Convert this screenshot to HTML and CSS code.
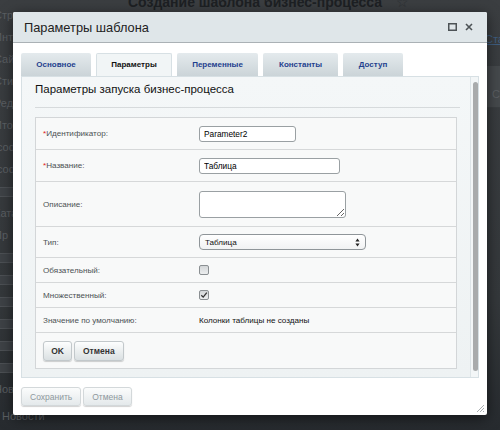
FILE: index.html
```html
<!DOCTYPE html>
<html lang="ru">
<head>
    <meta charset="UTF-8">
    <title>Параметры шаблона</title>
    <link rel="stylesheet" href="styles.css">
</head>
<body>

<div class="page">
    <div class="page-title">Создание шаблона бизнес-процесса <span class="star">☆</span></div>
    <div class="page-main">
        <div class="side">
            <div>Структура</div>
            <div>Интерфейс</div>
            <div>Сайт с</div>
            <div>Стиль</div>
            <div>Редизайн</div>
            <div>Итого</div>
            <div>[code]</div>
            <div>[code]</div>
            <div><span class="side-box"></span></div>
            <div>Каталог</div>
            <div>Пр</div>
            <div><span class="side-box"></span></div>
            <div><span class="side-box"></span></div>
            <div><span class="side-box"></span></div>
            <div><span class="side-box"></span></div>
            <div><span class="side-box"></span></div>
            <div><span class="side-box"></span></div>
            <div>Новости</div>
        </div>
        <div class="right-strip">
            <div class="strip-link">Статьи</div>
            <div class="strip-band">Со</div>
        </div>
    </div>
    <div class="page-bottom">Новости</div>
</div>

<div class="dialog">
    <div class="dialog-head">
        <div class="dialog-title">Параметры шаблона</div>
        <div class="dialog-icons">
            <svg width="9" height="8" viewBox="0 0 9 8"><rect x="0.75" y="0.75" width="7.5" height="6.5" fill="none" stroke="#4d5356" stroke-width="1.5"/></svg>
            <svg width="8" height="8" viewBox="0 0 8 8"><path d="M1 1 L7 7 M7 1 L1 7" stroke="#4d5356" stroke-width="1.6"/></svg>
        </div>
    </div>

    <div class="dialog-body">
        <div class="tabs">
            <div class="tab t-main">Основное</div>
            <div class="tab t-params active">Параметры</div>
            <div class="tab t-vars">Переменные</div>
            <div class="tab t-const">Константы</div>
            <div class="tab t-access">Доступ</div>
        </div>

        <div class="panel">
            <div class="panel-content">
                <div class="panel-title">Параметры запуска бизнес-процесса</div>

                <div class="form">
                    <div class="row">
                        <div class="label"><span class="req">*</span>Идентификатор:</div>
                        <div class="field"><input class="input w-id" type="text" value="Parameter2"></div>
                    </div>
                    <div class="row">
                        <div class="label"><span class="req">*</span>Название:</div>
                        <div class="field"><input class="input w-name" type="text" value="Таблица"></div>
                    </div>
                    <div class="row row-tall">
                        <div class="label">Описание:</div>
                        <div class="field"><textarea class="textarea"></textarea></div>
                    </div>
                    <div class="row row-type">
                        <div class="label">Тип:</div>
                        <div class="field">
                            <div class="select">
                                <span>Таблица</span>
                                <svg width="5" height="9" viewBox="0 0 5 9"><path d="M2.5 0.5 L4.6 3.6 H0.4 Z M2.5 8.5 L4.6 5.4 H0.4 Z" fill="#222"/></svg>
                            </div>
                        </div>
                    </div>
                    <div class="row row-short">
                        <div class="label">Обязательный:</div>
                        <div class="field"><span class="check"></span></div>
                    </div>
                    <div class="row row-short">
                        <div class="label">Множественный:</div>
                        <div class="field">
                            <span class="check">
                                <svg width="8" height="8" viewBox="0 0 8 8"><path d="M1.3 4.2 L3.2 6.1 L6.8 1.6" fill="none" stroke="#333" stroke-width="1.3"/></svg>
                            </span>
                        </div>
                    </div>
                    <div class="row row-short">
                        <div class="label">Значение по умолчанию:</div>
                        <div class="field">Колонки таблицы не созданы</div>
                    </div>
                    <div class="row row-buttons">
                        <button class="btn btn-ok">OK</button>
                        <button class="btn">Отмена</button>
                    </div>
                </div>
            </div>
            <div class="scrollbar"><div class="thumb"></div></div>
        </div>
    </div>

    <div class="dialog-foot">
        <button class="btn btn-off">Сохранить</button>
        <button class="btn btn-off">Отмена</button>
    </div>

    <svg class="grip" width="9" height="9" viewBox="0 0 9 9"><path d="M8 1 L1 8 M8 4 L4 8 M8 7 L7 8" stroke="#a9aeb1" stroke-width="1"/></svg>
</div>

</body>
</html>
```

FILE: styles.css
```css
body {
    margin: 0;
    width: 500px;
    height: 430px;
    overflow: hidden;
    position: relative;
    background: linear-gradient(#3b3e41, #34383b 70%, #272b2f);
    font-family: "Liberation Sans", Arial, sans-serif;
}

/* страница под затемнением */
.page {
    color: #5b5f63;
    font-size: 11px;
}
.page-title {
    margin-top: -7px;
    padding-left: 128px;
    font-size: 14px;
    font-weight: bold;
    line-height: 18px;
    color: #1d2023;
}
.star {
    font-weight: normal;
    color: #2c3033;
    margin-left: 10px;
}
.page-main {
    display: flex;
    justify-content: space-between;
}
.side {
    display: flex;
    flex-direction: column;
    width: 13px;
    margin-top: -7px;
    overflow: hidden;
}
.side div {
    height: 22px;
    line-height: 22px;
    white-space: nowrap;
    text-indent: -6px;
}
.side-box {
    display: inline-block;
    width: 26px;
    height: 8px;
    border: 1px solid #4c5054;
    background: #3e4246;
    vertical-align: middle;
}
.page-bottom {
    margin-top: 10px;
    padding-left: 2px;
}
.right-strip {
    width: 13px;
    overflow: hidden;
}
.strip-link {
    margin-top: 22px;
    color: #3f5e80;
    text-decoration: underline;
    white-space: nowrap;
    text-indent: -2px;
}
.strip-band {
    margin-top: 21px;
    height: 42px;
    padding-top: 22px;
    box-sizing: border-box;
    background: #45494c;
    border-bottom: 1px solid #3a3e41;
    white-space: nowrap;
    padding-left: 5px;
}

/* окно */
.dialog {
    position: absolute;
    left: 13px;
    top: 12px;
    width: 474px;
    height: 403px;
    background: #fff;
    border-radius: 2px;
    box-shadow: 0 3px 14px rgba(0, 0, 0, 0.55);
    display: flex;
    flex-direction: column;
}
.dialog-head {
    height: 30px;
    flex-shrink: 0;
    display: flex;
    align-items: center;
    justify-content: space-between;
    padding: 0 14px 0 11px;
    background: #dfe6e9;
    border-bottom: 1px solid #aab1b5;
    border-radius: 2px 2px 0 0;
}
.dialog-title {
    font-size: 12.8px;
    color: #222;
}
.dialog-icons {
    display: flex;
    align-items: center;
    gap: 8px;
}
.dialog-body {
    padding: 10px 8px 0;
}

.tabs {
    display: flex;
    gap: 5px;
    height: 23px;
}
.tab {
    box-sizing: border-box;
    text-align: center;
    line-height: 23px;
    font-size: 8px;
    font-weight: bold;
    color: #1f3f8e;
    background: linear-gradient(#e4eaed, #cbd4d8);
    border-radius: 2px 2px 0 0;
}
.t-main { width: 70px; }
.t-params { width: 76px; }
.t-vars { width: 81px; }
.t-const { width: 75px; }
.t-access { width: 60px; }
.tab.active {
    color: #111;
    background: #f1f5f6;
    border: 1px solid #d7e0e4;
    border-bottom: none;
    line-height: 22px;
}

.panel {
    height: 302px;
    box-sizing: border-box;
    display: flex;
    background: linear-gradient(#f4f7f8, #eef2f3);
    border: 1px solid #d7e0e4;
}
.panel-content {
    flex: 1;
    padding: 0 13px;
}
.panel-title {
    font-size: 11.5px;
    line-height: 24px;
    color: #111;
    padding-bottom: 6px;
    border-bottom: 1px solid #d6dadc;
    margin-right: -3px;
}
.scrollbar {
    width: 10px;
    border-left: 1px solid #dde4e7;
    background: #f3f6f7;
    padding: 5px 0 6px 2px;
    box-sizing: border-box;
}
.thumb {
    width: 5px;
    height: 100%;
    border-radius: 3px;
    background: #a9abac;
}

.form {
    margin-top: 9px;
    width: 420px;
    background: #f8f9f9;
    border: 1px solid #d3d6d8;
    font-size: 8.1px;
    color: #111;
}
.row {
    box-sizing: border-box;
    display: flex;
    align-items: center;
    height: 32px;
    border-bottom: 1px solid #d6d8d9;
}
.row-tall {
    height: 45px;
}
.row-type {
    height: 31px;
}
.row-short {
    height: 25px;
}
.row-buttons {
    height: 35px;
    border-bottom: none;
    gap: 2px;
    padding-left: 7px;
}
.label {
    width: 156px;
    padding-left: 7px;
    color: #4c5154;
}
.req {
    color: #d22;
}
.field {
    display: flex;
    align-items: center;
}
.input {
    height: 16px;
    box-sizing: border-box;
    border: 1px solid #9aa0a3;
    border-radius: 3px;
    background: #fff;
    font-family: inherit;
    font-size: 8.3px;
    color: #000;
    padding: 0 4px;
    margin: 0;
}
.w-id {
    width: 97px;
}
.w-name {
    width: 141px;
}
.textarea {
    width: 147px;
    height: 27px;
    box-sizing: border-box;
    border: 1px solid #9aa0a3;
    border-radius: 3px;
    background: #fff;
    margin: 0;
}
.select {
    width: 167px;
    height: 16px;
    box-sizing: border-box;
    border: 1px solid #8f9599;
    border-radius: 4px;
    background: linear-gradient(#fff, #f1f2f3);
    display: flex;
    align-items: center;
    justify-content: space-between;
    padding: 0 5px;
}
.check {
    width: 10px;
    height: 10px;
    box-sizing: border-box;
    border: 1px solid #8a8f92;
    border-radius: 2px;
    background: linear-gradient(#d3d6d8, #eceeef);
    display: flex;
    align-items: center;
    justify-content: center;
}

.btn {
    height: 20px;
    padding: 0 8px;
    border: 1px solid #c2c8cb;
    border-radius: 3px;
    background: linear-gradient(#fdfefe, #dae0e2);
    box-shadow: 0 1px 1px rgba(0, 0, 0, 0.18);
    font-family: inherit;
    font-size: 8.5px;
    font-weight: bold;
    color: #333;
}
.btn-ok {
    width: 29px;
    padding: 0;
}
.dialog-foot {
    display: flex;
    gap: 2px;
    padding: 9px 8px 0;
}
.btn-off {
    height: 19px;
    font-weight: normal;
    color: #8e989d;
    background: linear-gradient(#fbfcfc, #e4e9eb);
    border-color: #d3d8da;
}
.grip {
    position: absolute;
    right: 2px;
    bottom: 2px;
}
```
